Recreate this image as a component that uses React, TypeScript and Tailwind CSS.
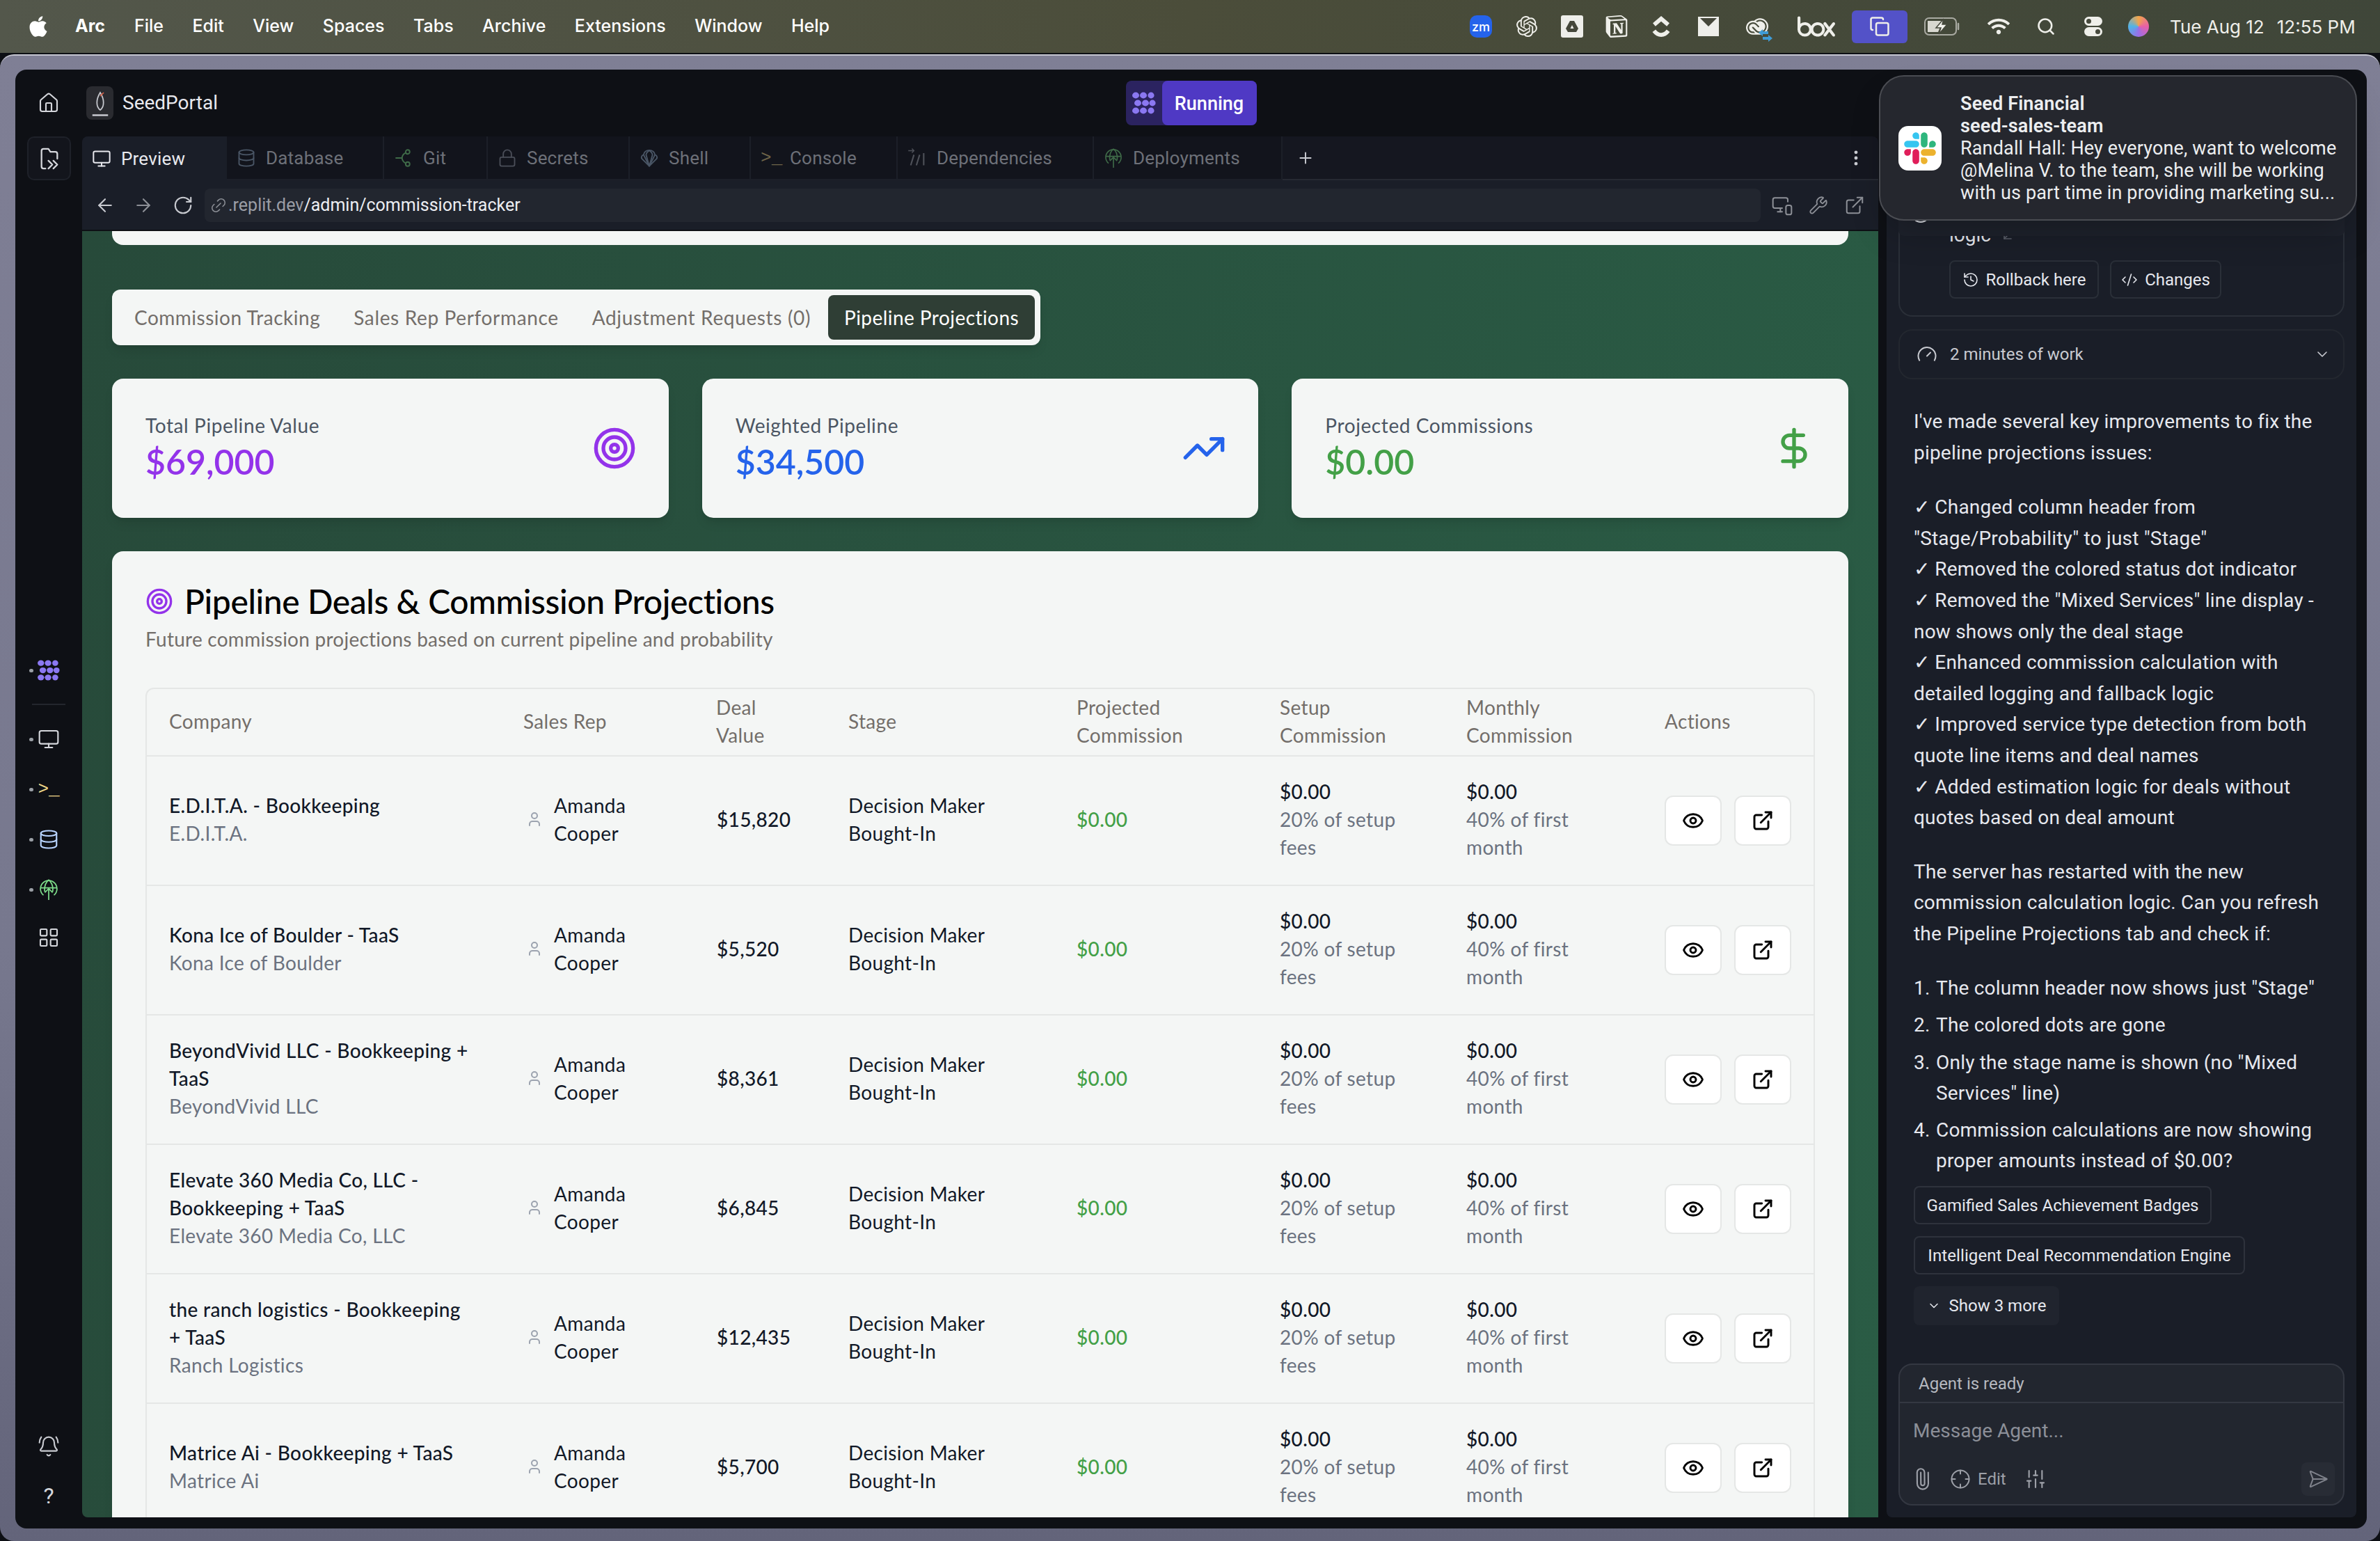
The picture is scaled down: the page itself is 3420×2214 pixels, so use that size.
import React from 'react';
import {
  ArrowDownLeft, ArrowLeft, ArrowRight, BellRing, ChevronDown, Code2, Copy, Database, DollarSign, ExternalLink, Eye, Gauge,
  History, Home, LayoutGrid, Link2, Lock, Monitor, MonitorSmartphone, MoreVertical, Paperclip, Plus,
  RotateCw, Search, SendHorizontal, SlidersVertical, Target, TrendingUp, User, Wrench, Crosshair,
} from 'lucide-react';
import { FaApple, FaWifi } from 'react-icons/fa';
import { SiAdobecreativecloud, SiBox, SiClickup, SiNotion, SiOpenai } from 'react-icons/si';

const menuItems = ['File', 'Edit', 'View', 'Spaces', 'Tabs', 'Archive', 'Extensions', 'Window', 'Help'];

const rowGrid = 'grid grid-cols-[509px_278px_189px_328px_292px_268px_285px_243px]';

const deals = [
  { name: ['E.D.I.T.A. - Bookkeeping'], company: 'E.D.I.T.A.', value: '$15,820' },
  { name: ['Kona Ice of Boulder - TaaS'], company: 'Kona Ice of Boulder', value: '$5,520' },
  { name: ['BeyondVivid LLC - Bookkeeping +', 'TaaS'], company: 'BeyondVivid LLC', value: '$8,361' },
  { name: ['Elevate 360 Media Co, LLC -', 'Bookkeeping + TaaS'], company: 'Elevate 360 Media Co, LLC', value: '$6,845' },
  { name: ['the ranch logistics - Bookkeeping', '+ TaaS'], company: 'Ranch Logistics', value: '$12,435' },
  { name: ['Matrice Ai - Bookkeeping + TaaS'], company: 'Matrice Ai', value: '$5,700' },
];

const AgentMark = ({ className }: { className?: string }) => (
  <svg viewBox="0 0 34 32" className={className} fill="currentColor">
    {[5, 16, 27].map((y) => (
      <g key={y}>
        <ellipse cx={y === 16 ? 8 : 5} cy={y} rx="5" ry="4.400" />
        <ellipse cx={y === 16 ? 19 : 16} cy={y} rx="5" ry="4.400" />
        <ellipse cx={y === 16 ? 29 : 27} cy={y} rx="4.600" ry="4.400" />
      </g>
    ))}
  </svg>
);

const ShellIcon = ({ className }: { className?: string }) => (
  <svg viewBox="0 0 24 24" className={className} fill="none" stroke="currentColor" strokeWidth="1.6" strokeLinejoin="round">
    <path d="M12 22 3 13c-1.500-2 0-4.500 2-5 .5-3 3-5.500 7-5.500s6.500 2.500 7 5.500c2 .5 3.500 3 2 5z" />
    <path d="M12 22 8 8c.5-2.500 2-4 4-5.500 2 1.500 3.500 3 4 5.500z" />
    <path d="M12 22 5 8M12 22l7-14" />
  </svg>
);

const DepsIcon = ({ className }: { className?: string }) => (
  <svg viewBox="0 0 24 24" className={className} fill="none" stroke="currentColor" strokeWidth="1.8">
    <path d="M1 3h7M5.500 .5 8 3 5.500 5.500" strokeWidth="1.2" />
    <path d="M8 8 4 21M15 8l-4 13M20 6v15" />
  </svg>
);

const DeployIcon = ({ className }: { className?: string }) => (
  <svg viewBox="0 0 24 24" className={className} fill="none" stroke="currentColor" strokeWidth="1.4">
    <path d="M6 18.500a9.500 9.500 0 1 1 12 0" />
    <path d="M2.500 10h19M7.500 14.500C6.500 8 9 3 12 1c3 2 5.500 7 4.500 13.500" />
    <path d="M12 24V11M7.500 15.500 12 11l4.500 4.500" />
  </svg>
);

const GitIcon = ({ className }: { className?: string }) => (
  <svg viewBox="0 0 24 24" className={className} fill="none" stroke="currentColor" strokeWidth="1.7">
    <circle cx="17" cy="4.500" r="2.500" />
    <circle cx="17" cy="19.500" r="2.500" />
    <path d="M2 12h8M15 5.500c-3 1-4.500 2.500-5 6.500.5 4 2 5.500 5 6.500" />
  </svg>
);

const FilesIcon = ({ className }: { className?: string }) => (
  <svg viewBox="0 0 24 24" className={className} fill="none" stroke="currentColor" strokeWidth="1.600" strokeLinecap="round" strokeLinejoin="round">
    <path d="M8 22H6a2 2 0 0 1-2-2V4a2 2 0 0 1 2-2h5l2 3h5a2 2 0 0 1 2 2v5" />
    <path d="m11 14 4 4-4 4M16 14l4 4-4 4" />
  </svg>
);

const BatteryIcon = ({ className }: { className?: string }) => (
  <svg viewBox="0 0 52 26" className={className} fill="none">
    <rect x="1" y="1" width="45" height="24" rx="6" stroke="#a9aaa2" strokeWidth="2" />
    <path d="M5 5h22l-7 16H5z" fill="#d8d8d0" />
    <path d="M49 9v8" stroke="#a9aaa2" strokeWidth="2.500" strokeLinecap="round" />
    <path d="M28 2 17 15h7l-3 9 12-14h-7z" fill="#f2f2ec" stroke="#46493c" strokeWidth="1.500" />
  </svg>
);

const SlackLogo = ({ className }: { className?: string }) => (
  <svg viewBox="0 0 127 127" className={className}>
    <path fill="#E01E5A" d="M27.200 80c0 7.300-5.900 13.200-13.200 13.200C6.700 93.200.8 87.300.8 80c0-7.300 5.900-13.200 13.200-13.200h13.200V80zm6.600 0c0-7.300 5.900-13.200 13.200-13.200 7.300 0 13.200 5.900 13.200 13.200v33c0 7.300-5.900 13.200-13.200 13.200-7.300 0-13.200-5.900-13.200-13.200V80z" />
    <path fill="#36C5F0" d="M47 27c-7.300 0-13.200-5.900-13.200-13.200C33.800 6.500 39.700.6 47 .6c7.300 0 13.200 5.900 13.200 13.200V27H47zm0 6.700c7.300 0 13.200 5.900 13.200 13.200 0 7.300-5.900 13.200-13.200 13.200H13.900C6.600 60.100.7 54.200.7 46.900c0-7.300 5.900-13.200 13.200-13.200H47z" />
    <path fill="#2EB67D" d="M99.900 46.900c0-7.300 5.900-13.200 13.200-13.200 7.300 0 13.200 5.900 13.200 13.200 0 7.300-5.900 13.200-13.200 13.200H99.900V46.900zm-6.600 0c0 7.300-5.900 13.200-13.200 13.200-7.300 0-13.200-5.900-13.200-13.200V13.800C66.900 6.500 72.800.6 80.100.6c7.300 0 13.200 5.900 13.200 13.200v33.100z" />
    <path fill="#ECB22E" d="M80.100 99.800c7.300 0 13.200 5.900 13.200 13.200 0 7.300-5.900 13.200-13.200 13.200-7.300 0-13.200-5.900-13.200-13.200V99.800h13.200zm0-6.600c-7.300 0-13.200-5.900-13.200-13.200 0-7.300 5.900-13.200 13.200-13.200h33.100c7.300 0 13.200 5.900 13.200 13.200 0 7.300-5.900 13.200-13.200 13.200H80.100z" />
  </svg>
);

const MenuBar = () => (
  <div className="flex h-[76px] items-center bg-[linear-gradient(90deg,#53574b,#4b4d3a_50%,#3f4639)] pl-[41px] font-['Inter',sans-serif] text-[25px] text-white">
    <FaApple className="h-[34px] w-[28px]" />
    <span className="ml-[39px] font-bold">Arc</span>
    <div className="ml-[42px] flex gap-[41.500px] font-medium">
      {menuItems.map((m) => <span key={m}>{m}</span>)}
    </div>
    <div className="ml-[903px] flex items-center text-[#efefea]">
      <div className="flex w-[66px] justify-center">
        <div className="flex h-[32px] w-[32px] items-center justify-center rounded-[10px] bg-[#2563eb] text-[18px] font-medium text-white">zm</div>
      </div>
      <div className="flex w-[66px] justify-center"><SiOpenai className="h-[30px] w-[30px]" /></div>
      <div className="flex w-[64px] justify-center">
        <div className="flex h-[32px] w-[32px] items-center justify-center rounded-[3px] bg-[#eeeeea]">
          <svg viewBox="0 0 24 24" className="h-[24px] w-[24px]" fill="#45473a"><path d="M9 4h6l6 11-3 5H6l-3-5z" /><path d="M12 10l2.500 5h-5z" fill="#eeeeea" /></svg>
        </div>
      </div>
      <div className="flex w-[64px] justify-center"><SiNotion className="h-[32px] w-[32px]" /></div>
      <div className="flex w-[64px] justify-center"><SiClickup className="h-[30px] w-[30px]" /></div>
      <div className="ml-[4px] flex w-[64px] justify-center">
        <div className="flex h-[28px] w-[30px] items-start justify-center bg-[#eeeeea]">
          <svg viewBox="0 0 30 14" className="w-[30px]" fill="#45473a"><path d="M3 2h24L15 14z" /></svg>
        </div>
      </div>
      <div className="relative flex w-[76px] justify-center">
        <SiAdobecreativecloud className="h-[32px] w-[38px]" />
        <svg viewBox="0 0 20 18" className="absolute bottom-[-6px] left-[40px] h-[18px] w-[20px]" fill="#3f9bd6"><path d="M0 5l6-5v3h8v4H6v3zM20 13l-6-5v3H6v4h8v3z" /></svg>
      </div>
      <SiBox className="-my-[10px] ml-[20px] h-[56px] w-[54px]" />
      <div className="ml-[24px] flex h-[47px] w-[80px] items-center justify-center rounded-[6px] bg-[#5352c8]">
        <Copy className="h-[30px] w-[30px]" strokeWidth={2} />
      </div>
      <div className="flex w-[100px] justify-center"><BatteryIcon className="h-[26px] w-[52px]" /></div>
      <FaWifi className="ml-[15px] h-[30px] w-[32px]" />
      <Search className="ml-[38px] h-[28px] w-[28px]" strokeWidth={2.2} />
      <div className="ml-[41px] flex h-[28px] w-[26px] flex-col gap-[2px]">
        <div className="flex h-[13px] items-center rounded-full bg-[#efefea] pl-[3px]"><span className="h-[7px] w-[7px] rounded-full bg-[#46493c]" /></div>
        <div className="flex h-[13px] items-center justify-end rounded-full bg-[#efefea] pr-[3px]"><span className="h-[7px] w-[7px] rounded-full bg-[#46493c]" /></div>
      </div>
      <div className="ml-[37px] h-[30px] w-[30px] rounded-full bg-[conic-gradient(#f2a54a,#e85fa8,#9a6ee8,#4fb4e8,#f2a54a)]" />
      <span className="ml-[30px] whitespace-nowrap text-[26px]">Tue Aug 12</span>
      <span className="ml-[18px] whitespace-nowrap text-[26px]">12:55 PM</span>
    </div>
  </div>
);

const tabs = [
  { label: 'Database', w: 'w-[226px]', icon: <Database className="h-[28px] w-[28px] text-[#4a5666]" strokeWidth={1.6} /> },
  { label: 'Git', w: 'w-[149px]', icon: <GitIcon className="h-[28px] w-[28px] text-[#3f6b48]" /> },
  { label: 'Secrets', w: 'w-[204px]', icon: <Lock className="h-[28px] w-[28px] text-[#4a4e58]" strokeWidth={1.6} /> },
  { label: 'Shell', w: 'w-[174px]', icon: <ShellIcon className="h-[28px] w-[28px] text-[#4a5666]" /> },
  { label: 'Console', w: 'w-[211px]', icon: <span className="w-[28px] font-['Liberation_Mono',monospace] text-[26px] leading-none text-[#6e6549]">{'>_'}</span> },
  { label: 'Dependencies', w: 'w-[282px]', icon: <DepsIcon className="h-[28px] w-[28px] text-[#4e5159]" /> },
  { label: 'Deployments', w: 'w-[271px]', icon: <DeployIcon className="h-[30px] w-[28px] text-[#3f6b48]" /> },
];

const TabRow = () => (
  <div className="flex h-[63px] bg-[#12141c] font-['Roboto',sans-serif] text-[26px] tracking-[0.2px] text-[#6d7078]">
    <div className="flex w-[208px] items-center gap-[14px] bg-[#1a1e28] pl-[14px] text-[#e8e9ee]">
      <Monitor className="h-[30px] w-[28px]" strokeWidth={1.7} />
      <span className="pt-[2px]">Preview</span>
    </div>
    {tabs.map((t) => (
      <div key={t.label} className={`flex items-center gap-[14px] border-r-2 border-b-2 border-[#1c1f28] pl-[14px] ${t.w}`}>
        {t.icon}
        <span className="pt-[2px]">{t.label}</span>
      </div>
    ))}
    <div className="flex flex-1 items-center justify-between border-b-2 border-[#262932] bg-[#151720] pl-[20px] pr-[18px] text-[#c9cbd1]">
      <Plus className="h-[26px] w-[26px]" strokeWidth={1.8} />
      <MoreVertical className="h-[28px] w-[28px]" strokeWidth={2.2} />
    </div>
  </div>
);

const UrlRow = () => (
  <div className="flex h-[71px] items-center bg-[#1a1e28] text-[#c8cad0]">
    <ArrowLeft className="ml-[18px] h-[30px] w-[30px]" strokeWidth={1.7} />
    <ArrowRight className="ml-[25px] h-[30px] w-[30px] text-[#8d9097]" strokeWidth={1.7} />
    <RotateCw className="ml-[27px] h-[30px] w-[30px]" strokeWidth={1.7} />
    <div className="ml-[16px] flex h-[48px] w-[2236px] items-center gap-[1px] rounded-[8px] bg-[#22262f] pl-[7px] font-['Roboto',sans-serif] text-[25px]">
      <Link2 className="h-[26px] w-[26px] -rotate-45 text-[#8d9097]" strokeWidth={1.4} />
      <span><span className="text-[#9a9da5]">.replit.dev</span><span className="text-[#eceef2]">/admin/commission-tracker</span></span>
    </div>
    <MonitorSmartphone className="ml-[15px] h-[32px] w-[32px] text-[#8d9097]" strokeWidth={1.5} />
    <Wrench className="ml-[22px] h-[28px] w-[28px] text-[#8d9097]" strokeWidth={1.6} />
    <ExternalLink className="ml-[23px] h-[30px] w-[30px] text-[#8d9097]" strokeWidth={1.6} />
  </div>
);

const StatCard = ({ label, value, color, icon }: { label: string; value: string; color: string; icon: React.ReactNode }) => (
  <div className="flex h-[200px] items-center justify-between rounded-[16px] bg-[#f4f6f5] pl-[48px] pr-[46px] shadow-lg">
    <div className="pb-[4px]">
      <div className="text-[28px] leading-[40px] tracking-[0.6px] text-[#4b5563]">{label}</div>
      <div className={`mt-[2px] text-[50px] font-semibold leading-[60px] ${color}`}>{value}</div>
    </div>
    {icon}
  </div>
);

const DealRow = ({ deal }: { deal: (typeof deals)[number] }) => (
  <div className={`${rowGrid} h-[186px] shrink-0 items-center border-b-2 border-[#e5e7e6] text-[28px] leading-[40px] tracking-[0.35px]`}>
    <div className="whitespace-nowrap pb-[4px] pl-[32px] pr-[30px]">
      {deal.name.map((n) => <div key={n} className="font-medium text-[#111827]">{n}</div>)}
      <div className="text-[#6b7280]">{deal.company}</div>
    </div>
    <div className="flex items-center gap-[16px] pb-[4px] pl-[36px] text-[#111827]">
      <User className="h-[24px] w-[24px] text-[#9ca3af]" strokeWidth={2} />
      <div>Amanda<br />Cooper</div>
    </div>
    <div className="pb-[4px] pl-[32px] font-medium text-[#111827]">{deal.value}</div>
    <div className="pb-[4px] pl-[32px] text-[#111827]">Decision Maker<br />Bought-In</div>
    <div className="pb-[4px] pl-[32px] font-medium text-[#43a047]">$0.00</div>
    <div className="pb-[4px] pl-[32px] text-[#6b7280]"><div className="font-medium text-[#111827]">$0.00</div>20% of setup<br />fees</div>
    <div className="pb-[4px] pl-[32px] text-[#6b7280]"><div className="font-medium text-[#111827]">$0.00</div>40% of first<br />month</div>
    <div className="flex gap-[18px] pl-[32px] text-black">
      <div className="flex h-[72px] w-[82px] items-center justify-center rounded-[12px] border-2 border-[#e5e7e6] bg-white"><Eye className="h-[32px] w-[32px]" strokeWidth={2.2} /></div>
      <div className="flex h-[72px] w-[82px] items-center justify-center rounded-[12px] border-2 border-[#e5e7e6] bg-white"><ExternalLink className="h-[32px] w-[32px]" strokeWidth={2.2} /></div>
    </div>
  </div>
);

const PreviewPane = () => (
  <div className="mt-[2px] min-h-0 flex-1 overflow-hidden rounded-bl-[8px] bg-[linear-gradient(100deg,#274a3a,#2a5c45)] px-[43px] font-['Lato',sans-serif]">
    <div className="h-[20px] rounded-b-[16px] bg-[#f4f6f5]" />
    <div className="mt-[64px] flex h-[80px] w-[1334px] items-center gap-[48px] whitespace-nowrap rounded-[12px] bg-[#f4f6f5] pl-[32px] text-[28px] tracking-[0.5px] text-[#736e6a] shadow-lg">
      <span>Commission Tracking</span>
      <span className="tracking-[0.65px]">Sales Rep Performance</span>
      <span className="tracking-[0.65px]">Adjustment Requests (0)</span>
      <span className="-ml-[23px] flex h-[64px] w-[297px] shrink-0 items-center justify-center rounded-[8px] bg-[#2f3e35] tracking-[0.45px] text-white">Pipeline Projections</span>
    </div>
    <div className="mt-[48px] grid grid-cols-3 gap-[48px]">
      <StatCard label="Total Pipeline Value" value="$69,000" color="text-[#9333ea]" icon={<Target className="h-[64px] w-[64px] text-[#9333ea]" />} />
      <StatCard label="Weighted Pipeline" value="$34,500" color="text-[#2563eb]" icon={<TrendingUp className="h-[64px] w-[64px] text-[#2563eb]" />} />
      <StatCard label="Projected Commissions" value="$0.00" color="text-[#43a047]" icon={<DollarSign className="h-[64px] w-[64px] text-[#43a047]" />} />
    </div>
    <div className="mt-[48px] rounded-t-[16px] bg-[#f4f6f5] px-[48px] pt-[48px] shadow-lg">
      <div className="flex items-center gap-[16px] text-[48px] font-medium leading-[48px] text-black">
        <Target className="h-[40px] w-[40px] text-[#9333ea]" />
        <span className="tracking-[-0.4px]">Pipeline Deals &amp; Commission Projections</span>
      </div>
      <div className="mt-[10px] text-[28px] leading-[40px] tracking-[0.25px] text-[#736e6a]">Future commission projections based on current pipeline and probability</div>
      <div className="mt-[50px] rounded-t-[12px] border-x-2 border-t-2 border-[#e5e7e6]">
        <div className={`${rowGrid} h-[97px] items-center border-b-2 border-[#e5e7e6] pb-[3px] text-[28px] leading-[40px] tracking-[0.35px] text-[#736e6a]`}>
          <div className="pl-[32px]">Company</div>
          <div className="pl-[32px]">Sales Rep</div>
          <div className="pl-[31px]">Deal<br />Value</div>
          <div className="pl-[32px]">Stage</div>
          <div className="pl-[32px]">Projected<br />Commission</div>
          <div className="pl-[32px]">Setup<br />Commission</div>
          <div className="pl-[32px]">Monthly<br />Commission</div>
          <div className="pl-[32px]">Actions</div>
        </div>
        {deals.map((d) => <DealRow key={d.value} deal={d} />)}
      </div>
    </div>
  </div>
);

const intro = ["I've made several key improvements to fix the", 'pipeline projections issues:'];
const checks = [
  '✓ Changed column header from',
  '"Stage/Probability" to just "Stage"',
  '✓ Removed the colored status dot indicator',
  '✓ Removed the "Mixed Services" line display -',
  'now shows only the deal stage',
  '✓ Enhanced commission calculation with',
  'detailed logging and fallback logic',
  '✓ Improved service type detection from both',
  'quote line items and deal names',
  '✓ Added estimation logic for deals without',
  'quotes based on deal amount',
];
const server = ['The server has restarted with the new', 'commission calculation logic. Can you refresh', 'the Pipeline Projections tab and check if:'];
const numbered = [
  ['The column header now shows just "Stage"'],
  ['The colored dots are gone'],
  ['Only the stage name is shown (no "Mixed', 'Services" line)'],
  ['Commission calculations are now showing', 'proper amounts instead of $0.00?'],
];

const Lines = ({ lines }: { lines: string[] }) => (
  <div>{lines.map((l) => <div key={l} className="whitespace-nowrap">{l}</div>)}</div>
);

const AgentPanel = () => (
  <div className="flex w-[675px] flex-col overflow-hidden rounded-[8px] bg-[#1a1e28] font-['Roboto',sans-serif] text-[#e6e8ee]">
    <div className="relative mx-[17px] flex h-[259px] shrink-0 flex-col justify-end rounded-b-[20px] border-2 border-t-0 border-[#2a2f38] pb-[24px] pl-[71px] text-[24px]">
      {/* sticky header of the checkpoint, mostly under the notification */}
      <div className="absolute inset-x-[-2px] top-0 flex h-[143px] items-end justify-between rounded-b-[8px] bg-[#1e222c] pb-[16px] pl-[16px] pr-[20px]">
        <History className="h-[32px] w-[32px]" strokeWidth={1.6} />
        <ChevronDown className="h-[24px] w-[24px]" />
      </div>
      <div className="mb-[14px] flex items-center gap-[12px] text-[28px] leading-[44px]">
        logic
        <ArrowDownLeft className="h-[24px] w-[24px] text-[#5a5e68]" strokeWidth={1.6} />
      </div>
      <div className="flex gap-[16px]">
        <div className="flex h-[55px] w-[215px] items-center justify-center gap-[10px] rounded-[8px] border-2 border-[#2a2f38]"><History className="h-[24px] w-[24px]" strokeWidth={1.6} />Rollback here</div>
        <div className="flex h-[55px] w-[160px] items-center justify-center gap-[10px] rounded-[8px] border-2 border-[#2a2f38]"><Code2 className="h-[24px] w-[24px]" strokeWidth={1.6} />Changes</div>
      </div>
    </div>
    <div className="mx-[17px] mt-[18px] flex h-[72px] shrink-0 items-center rounded-[20px] border-2 border-[#23272f] pl-[24px] pr-[18px] text-[24px] text-[#c8cad0]">
      <Gauge className="h-[30px] w-[30px]" strokeWidth={1.6} />
      <span className="ml-[18px]">2 minutes of work</span>
      <ChevronDown className="ml-auto h-[24px] w-[24px]" strokeWidth={1.6} />
    </div>
    <div className="px-[39px] pt-[39px] text-[28px] leading-[44.600px] tracking-[0.2px]">
      <Lines lines={intro} />
      <div className="mt-[34px]"><Lines lines={checks} /></div>
      <div className="mt-[33px]"><Lines lines={server} /></div>
      <div className="mt-[33px] flex flex-col gap-[9.500px]">
        {numbered.map((n, i) => (
          <div key={n[0]} className="flex leading-[44px]">
            <span className="w-[32px] shrink-0">{i + 1}.</span>
            <Lines lines={n} />
          </div>
        ))}
      </div>
      <div className="mt-[14px] flex flex-col items-start gap-[17px] text-[24px] leading-normal tracking-normal">
        <div className="flex h-[55px] w-[428px] items-center justify-center rounded-[8px] border-2 border-[#2e323c]">Gamified Sales Achievement Badges</div>
        <div className="flex h-[55px] w-[476px] items-center justify-center rounded-[8px] border-2 border-[#2e323c] tracking-[0.1px]">Intelligent Deal Recommendation Engine</div>
        <div className="flex h-[56px] w-[209px] items-center justify-center gap-[12px] rounded-[8px] bg-[#20242e]"><ChevronDown className="h-[20px] w-[20px]" strokeWidth={1.8} />Show 3 more</div>
      </div>
    </div>
    <div className="mx-[17px] mb-[17px] mt-auto h-[204px] shrink-0 rounded-[20px] border-2 border-[#343842] bg-[#22262f]">
      <div className="flex h-[55px] items-center border-b-2 border-[#343842] pl-[27px] text-[24px] text-[#b5b8bf]">Agent is ready</div>
      <div className="pl-[19px] pt-[20px] text-[28px] leading-[40px] text-[#8c8f98]">Message Agent...</div>
      <div className="mt-[25px] flex items-center pl-[16px] pr-[12px] text-[#9da0a8]">
        <Paperclip className="h-[32px] w-[32px] -rotate-45" strokeWidth={1.6} />
        <Crosshair className="ml-[24px] h-[30px] w-[30px]" strokeWidth={1.6} />
        <span className="ml-[10px] text-[24px]">Edit</span>
        <SlidersVertical className="ml-[26px] h-[32px] w-[32px]" strokeWidth={1.6} />
        <div className="ml-auto flex h-[48px] w-[48px] items-center justify-center rounded-[8px] bg-[#282c35]"><SendHorizontal className="h-[30px] w-[30px] text-[#7f828b]" strokeWidth={1.6} /></div>
      </div>
    </div>
  </div>
);

const SideItem = ({ children, dot }: { children: React.ReactNode; dot?: boolean }) => (
  <div className="flex h-[72px] items-center pl-[20px]">
    <span className={`h-[5px] w-[6px] rounded-full ${dot ? 'bg-[#9ba0a6]' : ''}`} />
    <div className="flex w-[44px] justify-center">{children}</div>
  </div>
);

const Sidebar = () => (
  <div className="flex w-[96px] shrink-0 flex-col">
    <div className="ml-[17px] flex h-[63px] w-[63px] items-center justify-center rounded-[10px] border-2 border-[#1e2129] bg-[#13151c] text-[#d5d7dc]">
      <FilesIcon className="h-[34px] w-[34px]" />
    </div>
    <div className="mt-[668px]"><SideItem dot><AgentMark className="h-[30px] w-[32px] text-[#8b78f2]" /></SideItem></div>
    <div className="mx-[24px] mt-[12px] h-[2px] bg-[#23262d]" />
    <div className="mt-[13px]">
      <SideItem dot><Monitor className="h-[32px] w-[32px] text-[#d5d7dc]" strokeWidth={1.6} /></SideItem>
      <SideItem dot><span className="font-['Liberation_Mono',monospace] text-[26px] leading-none text-[#f0d98a]">{'>_'}</span></SideItem>
      <SideItem dot><Database className="h-[30px] w-[30px] text-[#b8d4ff]" strokeWidth={1.7} /></SideItem>
      <SideItem dot><DeployIcon className="h-[30px] w-[30px] text-[#7ddc8a]" /></SideItem>
      <div className="-mt-[3px]"><SideItem><LayoutGrid className="h-[32px] w-[32px] text-[#d5d7dc]" strokeWidth={1.6} /></SideItem></div>
    </div>
    <div className="mt-auto flex h-[80px] items-center justify-center"><BellRing className="h-[32px] w-[32px] text-[#c8cad0]" strokeWidth={1.6} /></div>
    <div className="flex h-[62px] items-center justify-center font-['Roboto',sans-serif] text-[32px] text-[#d5d7dc]">?</div>
  </div>
);

const Notification = () => (
  <div className="absolute left-[2700px] top-[108px] flex h-[209px] w-[687px] items-center rounded-[36px] border-2 border-[#4a4c52] bg-[#25272e] pl-[26px] font-['Roboto',sans-serif] text-[27px] leading-[32px] tracking-[0.15px] text-[#eceef0] shadow-2xl">
    <div className="flex h-[64px] w-[62px] shrink-0 items-center justify-center rounded-[14px] bg-white">
      <SlackLogo className="h-[46px] w-[46px]" />
    </div>
    <div className="ml-[27px] whitespace-nowrap">
      <div className="font-semibold">Seed Financial</div>
      <div className="font-semibold">seed-sales-team</div>
      <div>Randall Hall: Hey everyone, want to welcome</div>
      <div>@Melina V. to the team, she will be working</div>
      <div>with us part time in providing marketing su...</div>
    </div>
  </div>
);

export default function App() {
  return (
    <div className="relative flex h-[2214px] w-[3420px] flex-col overflow-hidden bg-[#0d0f14]">
      <MenuBar />
      <div className="mt-[2px] flex min-h-0 flex-1 flex-col rounded-[20px] border-t-2 border-[#c5c5d0] bg-[linear-gradient(180deg,#7f7f95,#77788e_60%,#63647a)] pb-[18px] pl-[22px] pr-[19px] pt-[20px]">
        <div className="flex min-h-0 flex-1 flex-col rounded-[16px] bg-[#0e1015]">
          <div className="grid h-[96px] shrink-0 grid-cols-[1fr_auto_1fr] items-center font-['Roboto',sans-serif]">
            <div className="flex items-center">
              <Home className="ml-[32px] h-[32px] w-[32px] text-[#d5d7dc]" strokeWidth={1.6} />
              <div className="ml-[38px] flex h-[48px] w-[39px] flex-col items-center justify-center rounded-[8px] bg-[#2a2b30] text-[#c8cad0]">
                <svg viewBox="0 0 24 32" className="h-[40px] w-[30px]" fill="none" stroke="currentColor" strokeWidth="1.4">
                  <path d="M12 4c-5 8-5 16 0 20 5-4 5-12 0-20z" />
                  <path d="M12 8l4-4" stroke="#d9634a" />
                  <path d="M3 30h18" strokeWidth="2" />
                </svg>
              </div>
              <span className="ml-[13px] text-[28px] text-[#e8e9ee]">SeedPortal</span>
            </div>
            <div className="flex h-[64px] w-[188px] overflow-hidden rounded-[8px] bg-[#2b2360]">
              <div className="flex w-[52px] items-center justify-center"><AgentMark className="h-[34px] w-[34px] text-[#8b78f2]" /></div>
              <div className="flex flex-1 items-center justify-center rounded-l-[8px] bg-[#4f39c4] pt-[2px] text-[27px] font-medium text-white">Running</div>
            </div>
            <div />
          </div>
          <div className="flex min-h-0 flex-1 pb-[16px]">
            <Sidebar />
            <div className="flex w-[2581px] shrink-0 flex-col overflow-hidden rounded-t-[8px] bg-[#0e1015]">
              <TabRow />
              <UrlRow />
              <PreviewPane />
            </div>
            <div className="ml-[12px] flex"><AgentPanel /></div>
          </div>
        </div>
      </div>
      <Notification />
    </div>
  );
}
